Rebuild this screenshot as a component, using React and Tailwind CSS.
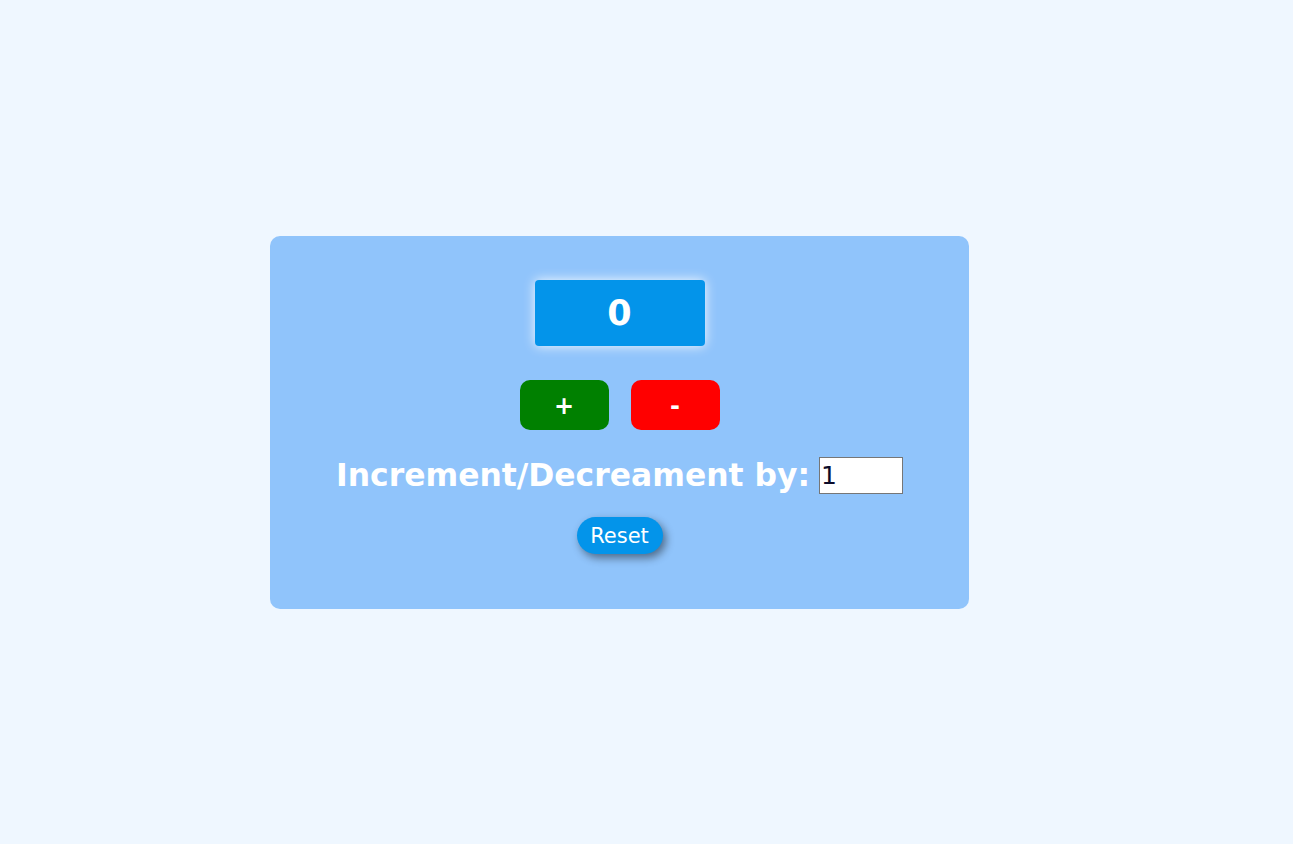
export default function App() {
  return (
    <div
      className="min-h-screen w-full bg-[#eff7ff] flex items-center pl-[270px]"
      style={{ fontFamily: '"DejaVu Sans", sans-serif' }}
    >
      <div className="w-[699px] h-[373px] bg-[#90c4fb] rounded-[10px] flex flex-col items-center pt-[44px]">
        <div className="w-[170px] h-[66px] bg-[#0394ea] rounded-[4px] flex items-center justify-center pt-[2px] text-white font-bold text-[35px] shadow-[0_0_12px_rgba(255,255,255,0.9)]">
          0
        </div>
        <div className="mt-[34px] flex gap-[22px]">
          <button className="w-[89px] h-[50px] rounded-[10px] bg-[#008000] text-white font-bold text-[24px] flex items-center justify-center pt-[3px]">
            +
          </button>
          <button className="w-[89px] h-[50px] rounded-[10px] bg-[#ff0000] text-white font-bold text-[24px] flex items-center justify-center pt-[3px]">
            -
          </button>
        </div>
        <div className="mt-[27px] h-[37px] flex items-center gap-[9px]">
          <span className="text-white font-bold text-[31.4px] leading-[37px]">Increment/Decreament by:</span>
          <input
            type="number"
            defaultValue="1"
            className="w-[84px] h-[37px] bg-white border border-[#767676] text-[25px] text-[#0b0b2a] pl-[1px] leading-none outline-none [appearance:textfield]"
            style={{ fontFamily: '"DejaVu Sans", sans-serif' }}
          />
        </div>
        <button className="mt-[23px] w-[86px] h-[37px] rounded-full bg-[#0394ea] text-white text-[21px] flex items-center justify-center pt-[3px] shadow-[3px_4px_8px_rgba(0,0,0,0.45)]">
          Reset
        </button>
      </div>
    </div>
  );
}
